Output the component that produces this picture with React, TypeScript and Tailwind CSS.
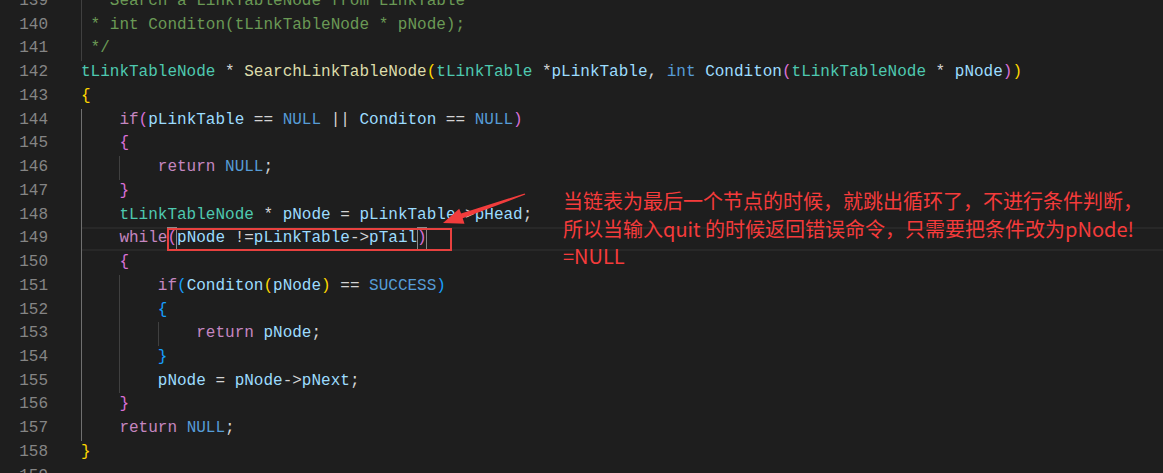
import React from "react";

type Tok = [string, string, boolean?];
type Row = { n: number; guides?: [number, string][]; toks: Tok[]; current?: boolean };

const t = "text-[#4ec9b0]";
const f = "text-[#dcdcaa]";
const v = "text-[#9cdcfe]";
const k = "text-[#c586c0]";
const b = "text-[#569cd6]";
const p = "text-[#d4d4d4]";
const c = "text-[#6a9955]";
const g = "text-[#ffd700]";
const o = "text-[#da70d6]";
const l = "text-[#179fff]";

const dim = "bg-[#404040]";
const act = "bg-[#707070]";

const rows: Row[] = [
  { n: 139, guides: [[0, dim]], toks: [[" * Search a LinkTableNode from LinkTable", c]] },
  { n: 140, guides: [[0, dim]], toks: [[" * int Conditon(tLinkTableNode * pNode);", c]] },
  { n: 141, guides: [[0, dim]], toks: [[" */", c]] },
  {
    n: 142,
    toks: [
      ["tLinkTableNode", t], [" * ", p], ["SearchLinkTableNode", f], ["(", g], ["tLinkTable", t],
      [" *", p], ["pLinkTable", v], [", ", p], ["int", b], [" ", p], ["Conditon", v], ["(", o],
      ["tLinkTableNode", t], [" * ", p], ["pNode", v], [")", o], [")", g],
    ],
  },
  { n: 143, toks: [["{", g]] },
  {
    n: 144,
    guides: [[0, act]],
    toks: [
      ["    ", p], ["if", k], ["(", o], ["pLinkTable", v], [" == ", p], ["NULL", b], [" || ", p],
      ["Conditon", v], [" == ", p], ["NULL", b], [")", o],
    ],
  },
  { n: 145, guides: [[0, act]], toks: [["    ", p], ["{", o]] },
  { n: 146, guides: [[0, act], [1, dim]], toks: [["        ", p], ["return", k], [" ", p], ["NULL", b], [";", p]] },
  { n: 147, guides: [[0, act]], toks: [["    ", p], ["}", o]] },
  {
    n: 148,
    guides: [[0, act]],
    toks: [
      ["    ", p], ["tLinkTableNode", t], [" * ", p], ["pNode", v], [" = ", p], ["pLinkTable", v],
      ["->", p], ["pHead", v], [";", p],
    ],
  },
  {
    n: 149,
    current: true,
    guides: [[0, act]],
    toks: [
      ["    ", p], ["while", k], ["(", o, true], ["pNode", v], [" !=", p], ["pLinkTable", v], ["->", p],
      ["pTail", v], [")", o, true],
    ],
  },
  { n: 150, guides: [[0, act]], toks: [["    ", p], ["{", o]] },
  {
    n: 151,
    guides: [[0, act], [1, dim]],
    toks: [
      ["        ", p], ["if", k], ["(", l], ["Conditon", v], ["(", g], ["pNode", v], [")", g], [" == ", p],
      ["SUCCESS", b], [")", l],
    ],
  },
  { n: 152, guides: [[0, act], [1, dim]], toks: [["        ", p], ["{", l]] },
  {
    n: 153,
    guides: [[0, act], [1, dim], [2, dim]],
    toks: [["            ", p], ["return", k], [" ", p], ["pNode", v], [";", p]],
  },
  { n: 154, guides: [[0, act], [1, dim]], toks: [["        ", p], ["}", l]] },
  {
    n: 155,
    guides: [[0, act], [1, dim]],
    toks: [["        ", p], ["pNode", v], [" = ", p], ["pNode", v], ["->", p], ["pNext", v], [";", p]],
  },
  { n: 156, guides: [[0, act]], toks: [["    ", p], ["}", o]] },
  { n: 157, guides: [[0, act]], toks: [["    ", p], ["return", k], [" ", p], ["NULL", b], [";", p]] },
  { n: 158, toks: [["}", g]] },
  { n: 159, toks: [] },
];

const guideLeft: Record<number, string> = {
  0: "left-[0px]",
  1: "left-[38.4px]",
  2: "left-[76.8px]",
};

const CodeRow = ({ row }: { row: Row }) => (
  <div className="flex h-[23.74px] leading-[23.74px]">
    <div className="w-[48px] shrink-0 text-right text-[#858585]">{row.n}</div>
    <div
      className={
        "relative ml-[33px] flex-1 whitespace-pre " +
        (row.current ? "shadow-[inset_0_2px_0_#282828,inset_0_-2px_0_#282828]" : "")
      }
    >
      {row.guides?.map(([lvl, col]) => (
        <div key={lvl} className={"absolute top-0 h-full w-px " + guideLeft[lvl] + " " + col} />
      ))}
      {row.toks.map(([text, cls, boxed], i) =>
        boxed ? (
          <span key={i} className={"inline-block outline outline-1 -outline-offset-1 outline-[#8a8a8a] " + cls}>
            {text}
          </span>
        ) : (
          <span key={i} className={cls}>
            {text}
          </span>
        )
      )}
    </div>
  </div>
);

export default function App() {
  return (
    <div className="relative h-[473px] w-[1163px] overflow-hidden bg-[#1e1e1e] font-['Liberation_Mono',monospace] text-[16px]">
      <div className="-mt-[10px] flex flex-col">
        {rows.map((r) => (
          <CodeRow key={r.n} row={r} />
        ))}
      </div>

      {/* screenshot annotation: red box, arrow and note */}
      <div className="absolute left-[167px] top-[228px] h-[23px] w-[285px] border-2 border-[#e8413f]" />
      <svg className="pointer-events-none absolute left-0 top-0" width="1163" height="473">
        <polygon
          points="525.3,194.6 524.7,193.4 461.1,213.5 459.2,208.8 443,223 464.5,223.8 462.7,218.3"
          fill="#f23c3c"
        />
      </svg>
      <div className="absolute left-[563px] top-[187px] whitespace-nowrap font-['Noto_Sans_CJK_SC','Noto_Sans',sans-serif] text-[20px] leading-[27.5px] text-[#f53b3b]">
        <div>当链表为最后一个节点的时候，就跳出循环了，不进行条件判断，</div>
        <div>所以当输入quit 的时候返回错误命令，只需要把条件改为pNode!</div>
        <div>=NULL</div>
      </div>
    </div>
  );
}
